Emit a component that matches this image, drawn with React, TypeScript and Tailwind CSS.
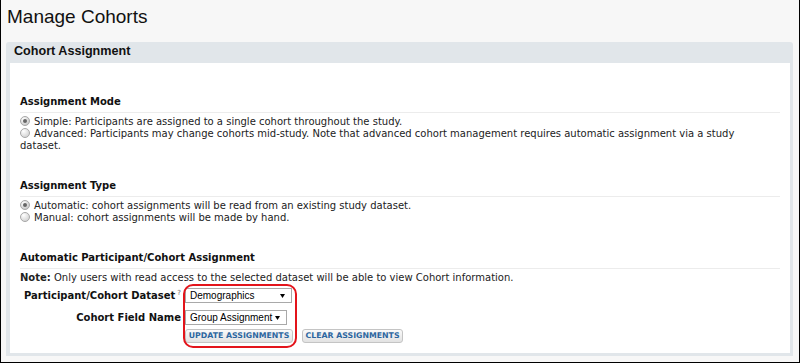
import React from 'react'

const body = { fontFamily: '"DejaVu Sans", Verdana, sans-serif' }
const arial = { fontFamily: '"Liberation Sans", Arial, sans-serif' }

function Radio({ checked }: { checked?: boolean }) {
  return (
    <svg width="10" height="10" viewBox="0 0 10 10" className="inline-block align-[-1px] mr-[4px]">
      <defs>
        <radialGradient id={checked ? 'rc' : 'ru'} cx="35%" cy="30%" r="75%">
          <stop offset="0%" stopColor="#ffffff" />
          <stop offset="100%" stopColor={checked ? '#c4c4c4' : '#d0d0d0'} />
        </radialGradient>
      </defs>
      <circle cx="5" cy="5" r="4.5" fill={`url(#${checked ? 'rc' : 'ru'})`} stroke="#a8a8a8" strokeWidth="1" />
      {checked && <circle cx="5" cy="5" r="2" fill="#666" />}
    </svg>
  )
}

function Heading({ children, first }: { children: React.ReactNode; first?: boolean }) {
  return (
    <div className={`${first ? '' : 'mt-[28px]'} font-bold leading-[12px] pb-[4px] border-b border-[#ececec] text-[#111]`}>
      {children}
    </div>
  )
}

function FakeSelect({ value, width }: { value: string; width: string }) {
  return (
    <div
      className={`${width} h-[15px] bg-white border border-[#a9a9a9] flex items-center justify-between pl-[4px] pr-[6px] text-[10px] text-black`}
      style={arial}
    >
      <span className="leading-[13px]">{value}</span>
      <svg width="5" height="4" viewBox="0 0 5 4">
        <path d="M0 0 H5 L2.5 4 Z" fill="#000" />
      </svg>
    </div>
  )
}

function Button({ label, width }: { label: string; width: string }) {
  return (
    <div
      className={`${width} h-[14px] flex items-center justify-center rounded-[3px] border border-[#c4c4c4] bg-gradient-to-b from-[#fafafa] to-[#e2e2e2] text-[7.8px] font-bold text-[#2c66a0] leading-none`}
    >
      {label}
    </div>
  )
}

export default function App() {
  return (
    <div className="w-[800px] h-[363px] bg-[#f7f7f7] border-x border-b border-black overflow-hidden">
      <div className="pl-[6px] pt-[5px] text-[19px] leading-[23px] text-[#111]" style={arial}>
        Manage Cohorts
      </div>

      <div className="ml-[5px] mt-[14px] w-[787px] h-[314px] bg-[#e1e6ea] rounded-t-[3px] pl-[4px] pr-[3px] pb-[3px] flex flex-col">
        <div className="h-[21px] -ml-[4px] pl-[8px] text-[12.6px] font-bold leading-[19px] text-[#111]" style={arial}>
          Cohort Assignment
        </div>

        <div className="flex-1 bg-white pt-[33px] pl-[10px] pr-[10px] text-[10px] text-[#222]" style={body}>
          <Heading first>Assignment Mode</Heading>
          <div className="mt-[3px] leading-[12px] pr-[12px]">
            <div>
              <Radio checked />
              Simple: Participants are assigned to a single cohort throughout the study.
            </div>
            <div>
              <Radio />
              Advanced: Participants may change cohorts mid-study. Note that advanced cohort management requires automatic assignment via a study dataset.
            </div>
          </div>

          <Heading>Assignment Type</Heading>
          <div className="mt-[3px] leading-[12px]">
            <div>
              <Radio checked />
              Automatic: cohort assignments will be read from an existing study dataset.
            </div>
            <div>
              <Radio />
              Manual: cohort assignments will be made by hand.
            </div>
          </div>

          <Heading>Automatic Participant/Cohort Assignment</Heading>
          <div className="mt-[3px] leading-[12px]">
            <span className="font-bold">Note:</span> Only users with read access to the selected dataset will be able to view Cohort information.
          </div>

          <div className="relative mt-[4px]">
            <div className="flex items-center">
              <div className="w-[161px] text-right font-bold leading-[12px] text-[#111]">
                Participant/Cohort Dataset<sup className="text-[7px] font-normal text-[#666] ml-[2px] -top-[4px]">?</sup>
              </div>
              <div className="ml-[4px]">
                <FakeSelect value="Demographics" width="w-[107px]" />
              </div>
            </div>
            <div className="flex items-center mt-[7px]">
              <div className="w-[161px] text-right font-bold leading-[12px] text-[#111]">Cohort Field Name</div>
              <div className="ml-[4px]">
                <FakeSelect value="Group Assignment" width="w-[102px]" />
              </div>
            </div>
            <div className="flex mt-[4px] ml-[165px] gap-[9px]">
              <Button label="UPDATE ASSIGNMENTS" width="w-[108px]" />
              <Button label="CLEAR ASSIGNMENTS" width="w-[101px]" />
            </div>

            <div className="absolute left-[163px] -top-[4px] w-[114px] h-[64px] border-2 border-[#e3141b] rounded-[10px] pointer-events-none" />
          </div>
        </div>
      </div>
    </div>
  )
}
